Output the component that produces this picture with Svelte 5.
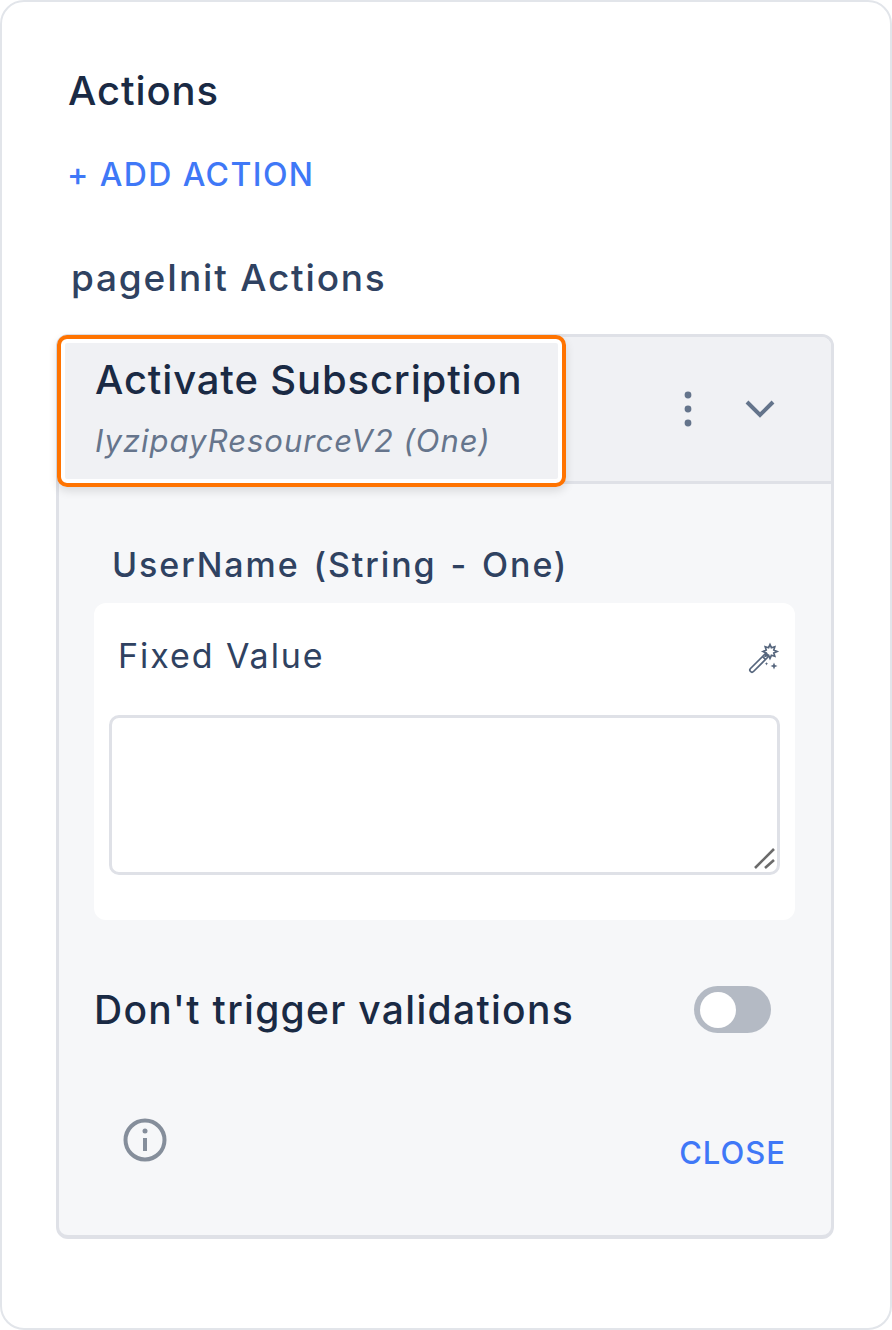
<script lang="ts">
  let enabled = false;
</script>

<div class="page">
  <h2 class="title">Actions</h2>
  <button class="add">+ ADD ACTION</button>
  <h3 class="group">pageInit Actions</h3>

  <section class="panel">
    <header class="head">
      <div class="head__text">
        <div class="head__name">Activate Subscription</div>
        <div class="head__sub">IyzipayResourceV2 (One)</div>
        <span class="highlight"></span>
      </div>
      <div class="head__icons">
        <svg class="dots" viewBox="0 0 10 38" width="10" height="38">
          <circle cx="5" cy="5" r="3.4" />
          <circle cx="5" cy="19" r="3.4" />
          <circle cx="5" cy="33" r="3.4" />
        </svg>
        <svg class="chev" viewBox="0 0 32 20" width="32" height="20">
          <path d="M3 3l13 13L29 3" />
        </svg>
      </div>
    </header>

    <div class="body">
      <div class="label">UserName (String - One)</div>
      <div class="field">
        <div class="field__top">
          <span class="field__label">Fixed Value</span>
          <svg class="wand" viewBox="0 0 32 32" width="32" height="32">
            <path d="M2.5 26.5L16.5 12.5a2 2 0 0 1 3 3L5.5 29.5a2 2 0 0 1-3-3zM14.5 14.5l3 3" />
            <path d="M22 2.5l1.4 3.2 3.4-1-1 3.4 3.2 1.4-3.2 1.4 1 3.4-3.4-1L22 16.500l-1.400-3.200-3.400 1 1-3.400-3.200-1.400 3.200-1.400-1-3.400 3.400 1z" />
            <path class="spark" d="M26 20.500l1 2.500 2.500 1-2.500 1-1 2.500-1-2.500-2.500-1 2.500-1zM18.500 20l.5 1.200 1.200.5-1.200.5-.5 1.200-.5-1.200-1.200-.5 1.200-.5z" />
          </svg>
        </div>
        <div class="area">
          <svg class="grip" viewBox="0 0 24 24" width="24" height="24">
            <path d="M2 20L21 1M12 20l9-8" />
          </svg>
        </div>
      </div>

      <div class="toggle-row">
        <span class="toggle-row__label">Don't trigger validations</span>
        <button class="switch" class:on={enabled} aria-label="Don't trigger validations" onclick={() => (enabled = !enabled)}>
          <span class="switch__knob"></span>
        </button>
      </div>

      <div class="foot">
        <svg class="info" viewBox="0 0 44 44" width="44" height="44">
          <circle cx="22" cy="22" r="19.500" />
          <path d="M22 20v13" />
          <circle class="info__dot" cx="22" cy="13" r="2.500" />
        </svg>
        <button class="close">CLOSE</button>
      </div>
    </div>
  </section>
</div>

<style>
  :global(body) {
    margin: 0;
    background: #fff;
    font-family: Inter, "Liberation Sans", sans-serif;
  }

  * {
    box-sizing: border-box;
  }

  button {
    font-family: inherit;
    background: none;
    border: none;
    padding: 0;
    cursor: pointer;
  }

  .page {
    width: 892px;
    height: 1330px;
    border: 2px solid #e2e5ea;
    border-radius: 24px;
    padding: 67px 56px 0 54px;
  }

  .title {
    margin: 0 0 0 12px;
    font-size: 40px;
    line-height: 44px;
    font-weight: 500;
    letter-spacing: 0.9px;
    color: #1a2a44;
  }

  .add {
    display: block;
    margin: 43px 0 0 11px;
    font-size: 32px;
    line-height: 38px;
    font-weight: 500;
    letter-spacing: 1.4px;
    color: #3f78f7;
  }

  .group {
    margin: 62px 0 0 15px;
    font-size: 37px;
    line-height: 44px;
    font-weight: 500;
    letter-spacing: 1.8px;
    color: #2f4261;
  }

  .panel {
    margin-top: 34px;
    width: 778px;
    height: 905px;
    border: 3px solid #dfe1e7;
    border-bottom-width: 4px;
    border-radius: 12px;
    background: #f6f7f9;
  }

  .head {
    height: 147px;
    display: flex;
    align-items: stretch;
    justify-content: space-between;
    background: #f0f1f4;
    border-bottom: 3px solid #dfe1e7;
    border-radius: 9px 9px 0 0;
  }

  .head__text {
    position: relative;
    width: 505px;
    padding: 17px 0 0 36px;
  }

  .head__name {
    font-size: 40px;
    line-height: 52px;
    font-weight: 500;
    letter-spacing: 0.85px;
    color: #1a2a44;
    white-space: nowrap;
  }

  .head__sub {
    margin-top: 15px;
    font-size: 31px;
    line-height: 40px;
    font-style: italic;
    letter-spacing: 1px;
    color: #66758c;
    white-space: nowrap;
  }

  .highlight {
    position: absolute;
    left: -2px;
    top: -2px;
    width: 509px;
    height: 152px;
    border: 4px solid #ff7300;
    border-radius: 10px;
    box-shadow:
      inset 0 0 0 4px #fff,
      0 4px 10px rgba(0, 0, 0, 0.12);
  }

  .head__icons {
    display: flex;
    align-items: center;
    gap: 51px;
    padding: 0 55px 0 0;
  }

  .dots {
    fill: #64748b;
  }

  .chev {
    fill: none;
    stroke: #64748b;
    stroke-width: 4;
  }

  .body {
    padding: 59px 36px 0 35px;
  }

  .label {
    margin-left: 18px;
    font-size: 34px;
    line-height: 44px;
    font-weight: 450;
    letter-spacing: 1.9px;
    word-spacing: 3px;
    color: #2f4261;
  }

  .field {
    margin-top: 16px;
    height: 317px;
    background: #fff;
    border-radius: 12px;
    padding: 28px 15px 0 15px;
  }

  .field__top {
    display: flex;
    justify-content: space-between;
    align-items: center;
    padding-left: 9px;
    height: 50px;
  }

  .field__label {
    font-size: 34px;
    line-height: 44px;
    letter-spacing: 1.94px;
    color: #2f4261;
  }

  .wand {
    margin-top: 4px;
    fill: none;
    stroke: #56667d;
    stroke-width: 1.700;
  }

  .spark {
    fill: #56667d;
    stroke: none;
  }

  .area {
    position: relative;
    margin-top: 34px;
    height: 160px;
    border: 3px solid #dfe1e7;
    border-radius: 10px;
    background: #fff;
  }

  .grip {
    position: absolute;
    right: 0;
    bottom: 0;
    fill: none;
    stroke: #6b6b6b;
    stroke-width: 2.600;
  }

  .toggle-row {
    margin-top: 61px;
    display: flex;
    align-items: center;
    justify-content: space-between;
    padding-right: 24px;
    height: 56px;
  }

  .toggle-row__label {
    font-size: 39px;
    font-weight: 500;
    letter-spacing: 1.3px;
    color: #1a2a44;
  }

  .switch {
    width: 77px;
    height: 47px;
    border-radius: 24px;
    background: #b4bac4;
    padding: 6px;
    display: flex;
  }

  .switch.on {
    justify-content: flex-end;
    background: #3f78f7;
  }

  .switch__knob {
    width: 36px;
    height: 36px;
    border-radius: 50%;
    background: #fff;
  }

  .foot {
    margin-top: 81px;
    display: flex;
    justify-content: space-between;
    align-items: flex-start;
    padding: 0 9px 0 29px;
  }

  .info {
    fill: none;
    stroke: #858e9b;
    stroke-width: 4;
  }

  .info__dot {
    fill: #858e9b;
    stroke: none;
  }

  .close {
    margin-top: 16px;
    font-size: 31px;
    line-height: 38px;
    font-weight: 500;
    letter-spacing: 1px;
    color: #3f78f7;
  }
</style>
